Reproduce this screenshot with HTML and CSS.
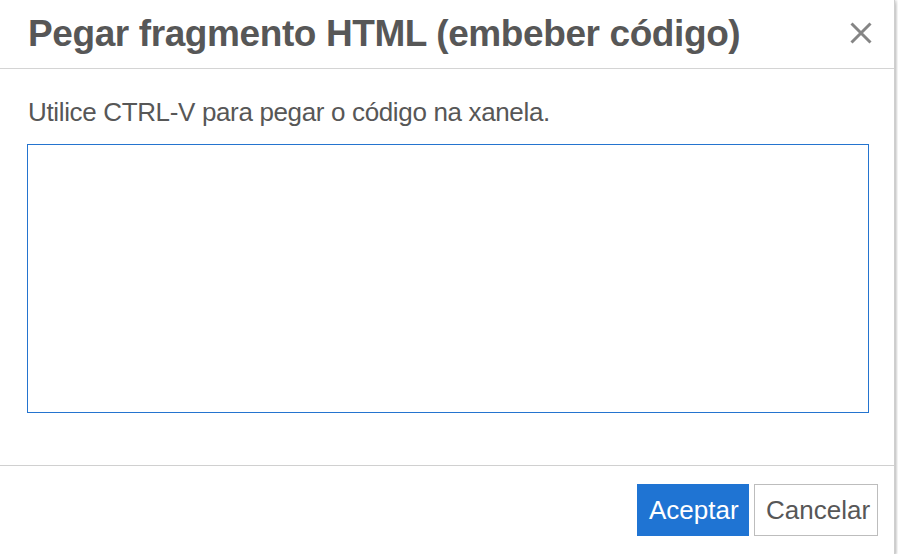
FILE: index.html
```html
<!DOCTYPE html>
<html lang="gl">
<head>
<meta charset="utf-8">
<title>Pegar fragmento HTML</title>
<link rel="stylesheet" href="styles.css">
</head>
<body>
<div class="dialog">
  <div class="header">
    <h1 class="title">Pegar fragmento HTML (embeber código)</h1>
    <button class="close" aria-label="Pechar">
      <svg width="22" height="22" viewBox="0 0 22 22"><path d="M1.5 1.5 L20.5 20.5 M20.5 1.5 L1.5 20.5" stroke="#858585" stroke-width="3" fill="none"/></svg>
    </button>
  </div>
  <div class="body">
    <p class="hint">Utilice CTRL-V para pegar o código na xanela.</p>
    <textarea class="paste"></textarea>
  </div>
  <div class="footer">
    <button class="btn btn-ok">Aceptar</button>
    <button class="btn btn-cancel">Cancelar</button>
  </div>
</div>
</body>
</html>
```
FILE: styles.css
```css
html, body {
  margin: 0;
  padding: 0;
  background: #ffffff;
}
body {
  font-family: "Liberation Sans", Arial, sans-serif;
  color: #575757;
}
.dialog {
  width: 895px;
  height: 554px;
  background: #fff;
  border-right: 1px solid #cfcfcf;
  box-shadow: 0 3px 3px rgba(0,0,0,0.25), 2px 0 2px rgba(0,0,0,0.12);
  display: flex;
  flex-direction: column;
  box-sizing: border-box;
}
.header {
  height: 69px;
  box-sizing: border-box;
  border-bottom: 1px solid #d4d4d4;
  display: flex;
  align-items: center;
  justify-content: space-between;
  padding: 0 22px 2px 28px;
}
.title {
  margin: 0;
  font-size: 37px;
  letter-spacing: -0.4px;
  line-height: 1;
  font-weight: bold;
  color: #575757;
}
.close {
  border: 0;
  background: none;
  padding: 0;
  width: 22px;
  height: 22px;
  display: flex;
}
.body {
  flex: 1;
  border-bottom: 1px solid #d0d0d0;
  padding: 30px 25px 0 27px;
  display: flex;
  flex-direction: column;
}
.hint {
  margin: 0 0 0 1px;
  font-size: 26px;
  letter-spacing: -0.35px;
  line-height: 26px;
}
.paste {
  margin-top: 19px;
  width: 842px;
  height: 269px;
  box-sizing: border-box;
  border: 1px solid #2474cf;
  outline: none;
  resize: none;
  padding: 0;
}
.footer {
  height: 88px;
  display: flex;
  justify-content: flex-end;
  align-items: flex-start;
  padding: 18px 16px 0 0;
  box-sizing: border-box;
  gap: 5px;
}
.btn {
  height: 52px;
  font-family: "Liberation Sans", Arial, sans-serif;
  font-size: 26px;
  box-sizing: border-box;
  padding: 0 11px;
  border-radius: 0;
}
.btn-ok {
  width: 112px;
  background: #1f74d3;
  color: #fff;
  border: 1px solid #1f74d3;
}
.btn-cancel {
  width: 124px;
  background: #fff;
  color: #575757;
  border: 1px solid #bdbdbd;
}
```
